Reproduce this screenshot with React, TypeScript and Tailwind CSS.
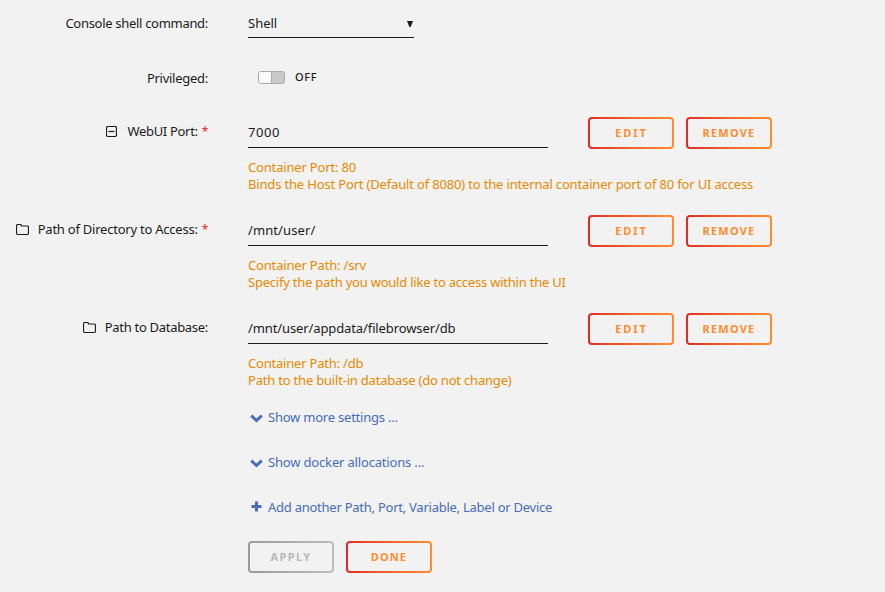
import type { ReactNode } from 'react';

function FolderIcon() {
  return (
    <svg width="13" height="12" viewBox="0 0 13 12" fill="none" stroke="currentColor" strokeWidth="1.2">
      <path d="M.5 2Q.5.5 2 .5h2.200Q5.500.5 5.500 2H11q1.500 0 1.500 1.500v5.500q0 1.500-1.500 1.500H2Q.5 10.500.5 9Z" />
    </svg>
  );
}

function MinusIcon() {
  return (
    <svg width="11" height="12" viewBox="0 0 11 12" className="mr-px" fill="none" stroke="currentColor" strokeWidth="1.2">
      <rect x=".5" y=".5" width="10" height="10" rx="1.500" />
      <path d="M2.500 5.500h6" />
    </svg>
  );
}

function ChevronIcon() {
  return (
    <svg width="13" height="9" viewBox="0 0 13 9" className="mt-px mr-px" fill="none" stroke="currentColor" strokeWidth="3">
      <path d="M1.300 1.700l5.200 4.800 5.200-4.800" />
    </svg>
  );
}

function PlusIcon() {
  return (
    <svg width="11" height="11" viewBox="0 0 11 11" className="mb-[2px]" fill="none" stroke="currentColor" strokeWidth="3">
      <path d="M.5 5.500h10M5.500.5v10" />
    </svg>
  );
}

type ButtonProps = { children: ReactNode; className: string; disabled?: boolean };

function Button({ children, className, disabled }: ButtonProps) {
  const frame = disabled ? 'from-[#9b9b9b] to-[#bdbdbd]' : 'from-[#e22828] to-[#ff8c2f]';
  const text = disabled ? 'text-[#b9b9b9]' : 'text-[#ff8c2f]';
  return (
    <button className={`h-8 w-[86px] rounded-[4px] bg-linear-to-r p-[2px] ${frame}`}>
      <span
        className={`flex h-full items-center justify-center rounded-[2px] bg-[#f2f2f2] pb-[2px] text-[11px] font-bold ${text} ${className}`}
      >
        {children}
      </span>
    </button>
  );
}

type Setting = {
  icon: ReactNode;
  label: string;
  labelClass: string;
  required?: boolean;
  value: string;
  valueClass: string;
  help: { text: string; className: string }[];
};

const settings: Setting[] = [
  {
    icon: <MinusIcon />,
    label: 'WebUI Port:',
    labelClass: 'tracking-[-0.32px]',
    required: true,
    value: '7000',
    valueClass: 'tracking-[0.6px]',
    help: [
      { text: 'Container Port: 80', className: 'tracking-[-0.17px]' },
      {
        text: 'Binds the Host Port (Default of 8080) to the internal container port of 80 for UI access',
        className: 'tracking-[-0.165px]',
      },
    ],
  },
  {
    icon: <FolderIcon />,
    label: 'Path of Directory to Access:',
    labelClass: 'tracking-[-0.23px]',
    required: true,
    value: '/mnt/user/',
    valueClass: 'tracking-[0.1px]',
    help: [
      { text: 'Container Path: /srv', className: 'tracking-[-0.17px]' },
      { text: 'Specify the path you would like to access within the UI', className: 'tracking-[-0.22px]' },
    ],
  },
  {
    icon: <FolderIcon />,
    label: 'Path to Database:',
    labelClass: 'tracking-[-0.3px]',
    value: '/mnt/user/appdata/filebrowser/db',
    valueClass: 'tracking-[-0.11px]',
    help: [
      { text: 'Container Path: /db', className: 'tracking-[-0.2px]' },
      { text: 'Path to the built-in database (do not change)', className: 'tracking-[-0.2px]' },
    ],
  },
];

function SettingRow({ icon, label, labelClass, required, value, valueClass, help }: Setting) {
  return (
    <div className="flex h-[98px]">
      <div className="flex h-[43px] w-[208px] shrink-0 items-center justify-end">
        {icon}
        <span className={`ml-[9px] ${labelClass}`}>{label}</span>
        {required && <span className="ml-1 text-[12px] tracking-[-0.3px] text-[#e22828]">*</span>}
      </div>
      <div className="ml-10">
        <div className="flex">
          <div className={`flex h-[38px] w-[300px] items-center border-b border-[#1c1b1b] pt-[7px] ${valueClass}`}>
            {value}
          </div>
          <div className="ml-10 mt-[7px] flex gap-3">
            <Button className="pl-px tracking-[1.9px]">EDIT</Button>
            <Button className="tracking-[1.2px]">REMOVE</Button>
          </div>
        </div>
        <div className="mt-[10px] text-[#e68a00]">
          {help.map((line) => (
            <p key={line.text} className={line.className}>
              {line.text}
            </p>
          ))}
        </div>
      </div>
    </div>
  );
}

const links = [
  { text: 'Show more settings ...', icon: <ChevronIcon />, className: 'tracking-[-0.22px]' },
  { text: 'Show docker allocations ...', icon: <ChevronIcon />, className: 'tracking-[-0.17px]' },
  { text: 'Add another Path, Port, Variable, Label or Device', icon: <PlusIcon />, className: 'tracking-[-0.25px]' },
];

export default function App() {
  return (
    <div className="h-[592px] w-full overflow-hidden whitespace-nowrap bg-[#f2f2f2] font-['Noto_Sans',sans-serif] text-[13px] leading-[17px] text-[#1c1b1b]">
      <div className="flex h-[55px]">
        <div className="w-[208px] pt-[15px] text-right tracking-[-0.3px]">Console shell command:</div>
        <div className="ml-10 flex h-[38px] w-[166px] items-center justify-between border-b border-[#1c1b1b] pt-[10px]">
          <span>Shell</span>
          <svg width="6" height="6" viewBox="0 0 6 6" className="mr-px" fill="currentColor">
            <path d="M0 0h6L3.600 6H2.400z" />
          </svg>
        </div>
      </div>
      <div className="flex h-[55px]">
        <div className="w-[208px] pt-[15px] text-right tracking-[-0.27px]">Privileged:</div>
        <div className="ml-[50px] flex h-[45px] items-center">
          <div className="h-[13px] w-[27px] rounded-[3px] border border-[#aaa] bg-[#cacaca]">
            <div className="h-full w-[13px] rounded-[2px] border-r border-[#aaa] bg-[#fafafa]" />
          </div>
          <span className="ml-[10px] pb-[2px] text-[11px] font-medium tracking-[0.6px]">OFF</span>
        </div>
      </div>
      {settings.map((setting) => (
        <SettingRow key={setting.label} {...setting} />
      ))}
      <div className="ml-[248px] flex flex-col gap-7 pt-[5px] text-[#486dba]">
        {links.map(({ text, icon, className }) => (
          <div key={text} className="flex h-[17px] items-center">
            <span className="flex w-[17px] justify-center">{icon}</span>
            <span className={`ml-[3px] ${className}`}>{text}</span>
          </div>
        ))}
      </div>
      <div className="ml-[248px] mt-[25px] flex gap-3">
        <Button disabled className="tracking-[1.4px]">APPLY</Button>
        <Button className="tracking-[1.1px]">DONE</Button>
      </div>
    </div>
  );
}
